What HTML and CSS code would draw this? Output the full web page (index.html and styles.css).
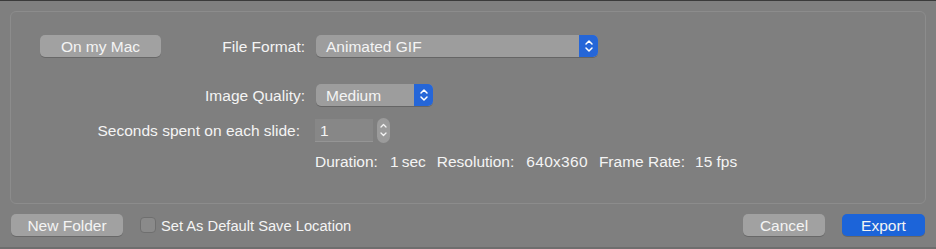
FILE: index.html
```html
<!DOCTYPE html>
<html>
<head>
<meta charset="utf-8">
<link rel="stylesheet" href="styles.css">
</head>
<body>
<div class="window">
  <div class="panel">
    <div class="row row-format">
      <div class="lead">
        <button class="btn btn-loc">On my Mac</button>
        <span class="label">File Format:</span>
      </div>
      <div class="popup popup-format">
        <span class="popup-text">Animated GIF</span>
        <span class="popup-cap">
          <svg width="10" height="16" viewBox="0 0 10 16"><path d="M2 6 L5 3 L8 6 M2 10 L5 13 L8 10" fill="none" stroke="#fff" stroke-width="1.5" stroke-linecap="round" stroke-linejoin="round"/></svg>
        </span>
      </div>
    </div>
    <div class="row row-quality">
      <div class="lead lead-right">
        <span class="label">Image Quality:</span>
      </div>
      <div class="popup popup-quality">
        <span class="popup-text">Medium</span>
        <span class="popup-cap">
          <svg width="10" height="16" viewBox="0 0 10 16"><path d="M2 6 L5 3 L8 6 M2 10 L5 13 L8 10" fill="none" stroke="#fff" stroke-width="1.5" stroke-linecap="round" stroke-linejoin="round"/></svg>
        </span>
      </div>
    </div>
    <div class="row row-seconds">
      <div class="lead lead-right lead-seconds">
        <span class="label">Seconds spent on each slide:</span>
      </div>
      <div class="field">1</div>
      <div class="stepper">
        <svg width="9" height="20" viewBox="0 0 9 20"><path d="M2 7 L4.5 4.5 L7 7 M2 13 L4.5 15.5 L7 13" fill="none" stroke="#f4f4f4" stroke-width="1.3" stroke-linecap="round" stroke-linejoin="round"/></svg>
      </div>
    </div>
    <div class="info">
      <span class="k">Duration:</span><span class="v">1&#8201;sec</span>
      <span class="k">Resolution:</span><span class="v v-res">640x360</span>
      <span class="k k-rate">Frame Rate:</span><span class="v">15 fps</span>
    </div>
  </div>
  <div class="footer">
    <button class="btn btn-folder">New Folder</button>
    <span class="check"></span>
    <span class="check-label">Set As Default Save Location</span>
    <span class="spacer"></span>
    <button class="btn btn-cancel">Cancel</button>
    <button class="btn btn-export">Export</button>
  </div>
</div>
</body>
</html>
```
FILE: styles.css
```css
* { box-sizing: border-box; }
html, body {
  margin: 0;
  padding: 0;
  width: 936px;
  height: 249px;
  overflow: hidden;
  background: #7f7f7f;
}
body {
  font-family: "Liberation Sans", Arial, sans-serif;
  font-size: 15.5px;
  color: #f4f4f4;
}
.window {
  width: 936px;
  height: 249px;
  border-top: 1px solid #3a3a3a;
  border-bottom: 2px solid #6e6e6e;
  display: flex;
  flex-direction: column;
}
.panel {
  margin: 10px 10px 0 10px;
  height: 193px;
  border: 1px solid #8c8c8c;
  border-radius: 6px;
  display: flex;
  flex-direction: column;
}
.row {
  display: flex;
  align-items: center;
  height: 22px;
}
.row-format { margin-top: 23px; }
.row-quality { margin-top: 27px; }
.row-seconds { margin-top: 13px; }
.lead {
  width: 294px;
  padding-left: 29px;
  display: flex;
  align-items: center;
  justify-content: space-between;
  margin-right: 11px;
}
.lead-right { justify-content: flex-end; }
.lead-seconds { padding-right: 5px; }
.label {
  white-space: nowrap;
  line-height: 20px;
  padding-top: 2px;
}
.btn {
  font: inherit;
  color: #f4f4f4;
  border: none;
  height: 22px;
  border-radius: 5px;
  background: #a1a1a1;
  box-shadow: 0 1px 0 rgba(0,0,0,0.18);
  padding: 2px 0 0 0;
  line-height: 20px;
  text-align: center;
}
.btn-loc { width: 121px; }
.popup {
  display: flex;
  height: 22px;
  border-radius: 5px;
  background: #9d9d9d;
  box-shadow: 0 1px 0 rgba(0,0,0,0.2);
  overflow: hidden;
}
.popup-format { width: 282px; }
.popup-quality { width: 117px; }
.popup-text {
  flex: 1;
  padding: 2px 0 0 10px;
  line-height: 20px;
}
.popup-cap {
  width: 19px;
  background: #2566d8;
  display: flex;
  align-items: center;
  justify-content: center;
}
.field {
  width: 58px;
  height: 23px;
  margin-left: -1px;
  background: #878787;
  border-bottom: 1px solid #959595;
  padding: 2px 0 0 5px;
  line-height: 20px;
}
.stepper {
  width: 13px;
  height: 25px;
  margin-left: 4px;
  border-radius: 7px;
  background: #9b9b9b;
  display: flex;
  align-items: center;
  justify-content: center;
}
.info {
  margin-top: 11px;
  padding-left: 304px;
  height: 20px;
  line-height: 20px;
  display: flex;
  white-space: nowrap;
}
.info .k { margin-right: 12px; }
.info .k-rate { margin-right: 10px; }
.info .v { margin-right: 11px; }
.info .v-res { letter-spacing: 0.3px; }
.footer {
  display: flex;
  align-items: center;
  height: 22px;
  margin-top: 10px;
  padding: 0 11px;
}
.btn-folder { width: 112px; }
.check {
  width: 16px;
  height: 16px;
  margin-left: 17px;
  border-radius: 4px;
  background: #8a8a8a;
  border: 1px solid #6f6f6f;
}
.check-label {
  margin-left: 5px;
  font-size: 14.7px;
  line-height: 20px;
  padding-top: 2px;
}
.spacer { flex: 1; }
.btn-cancel { width: 82px; }
.btn-export {
  width: 83px;
  margin-left: 17px;
  background: #1c64d9;
}
```
